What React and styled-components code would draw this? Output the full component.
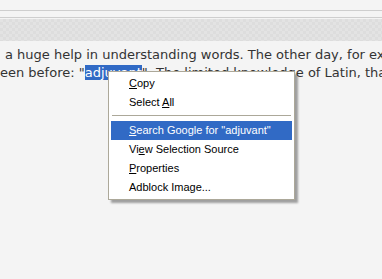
import React from 'react';
import styled, { createGlobalStyle } from 'styled-components';

const GlobalStyle = createGlobalStyle`
  html, body {
    margin: 0;
    padding: 0;
    background: #f4f4f4;
  }
`;

const Page = styled.div`
  position: relative;
  width: 382px;
  height: 279px;
  overflow: hidden;
  background: #f4f4f4;
`;

const Chrome = styled.div`
  padding-top: 10px;
  display: flex;
  flex-direction: column;
`;

const Rule = styled.div`
  height: 1px;
  background: #cecece;
  margin-bottom: ${(p) => p.gap}px;
`;

const Band = styled.div`
  height: 22px;
  background-color: #e0e0e0;
  background-image: repeating-conic-gradient(#dddddd 0 25%, #e3e3e3 0 50%);
  background-size: 6px 6px;
`;

const Body = styled.div`
  padding-top: 5px;
  font-family: 'DejaVu Sans', Verdana, sans-serif;
  font-size: 13px;
  line-height: 18px;
  color: #333;
`;

const Line = styled.div`
  white-space: nowrap;
  padding-left: ${(p) => p.indent || 0}px;
`;

const Selected = styled.span`
  background: #316ac5;
  color: #fff;
`;

const Menu = styled.ul`
  position: absolute;
  left: 108px;
  top: 71px;
  width: 181px;
  margin: 0;
  padding: 2px;
  list-style: none;
  background: #fff;
  border: 1px solid #aca899;
  box-shadow: 3px 3px 2px rgba(0, 0, 0, 0.35);
  font-family: 'Liberation Sans', Arial, sans-serif;
  font-size: 11px;
  color: #000;
`;

const Item = styled.li`
  height: 19px;
  line-height: 19px;
  padding-left: 18px;
  white-space: nowrap;
  background: ${(p) => (p.active ? '#316ac5' : 'transparent')};
  color: ${(p) => (p.active ? '#fff' : '#000')};

  u {
    text-decoration: underline;
    text-underline-offset: 1px;
  }
`;

const Separator = styled.li`
  height: 1px;
  margin: 3px 1px 5px;
  background: #aca899;
`;

export default function App() {
  return (
    <Page>
      <GlobalStyle />
      <Chrome>
        <Rule gap={6} />
        <Rule gap={1} />
        <Band />
      </Chrome>
      <Body>
        <Line indent={5}>a huge help in understanding words. The other day, for example</Line>
        <Line>
          een before: "<Selected>adjuvant</Selected>". The limited knowledge of Latin, that I have
        </Line>
      </Body>
      <Menu>
        <Item><u>C</u>opy</Item>
        <Item>Select <u>A</u>ll</Item>
        <Separator />
        <Item active><u>S</u>earch Google for "adjuvant"</Item>
        <Item>Vi<u>e</u>w Selection Source</Item>
        <Item><u>P</u>roperties</Item>
        <Item>Adblock Image...</Item>
      </Menu>
    </Page>
  );
}
